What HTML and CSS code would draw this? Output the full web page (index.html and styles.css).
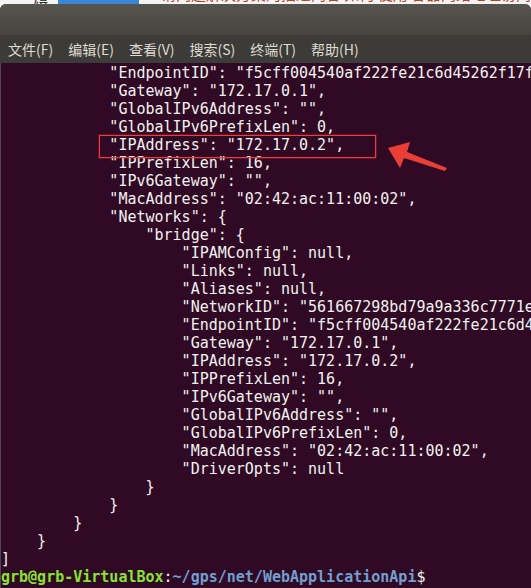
FILE: index.html
```html
<!DOCTYPE html>
<html lang="zh-CN">
<head>
    <meta charset="UTF-8">
    <title>Terminal</title>
    <link rel="stylesheet" href="styles.css">
</head>
<body>
    <div class="behind">
        <div class="behind-row">
            <span class="behind-label">编辑</span>
            <span class="behind-button">手动添加文章标签</span>
            <span class="behind-text">请问题解决方案的描述内容 如何 使用 容器网络地址访问</span>
        </div>
    </div>

    <div class="window">
        <div class="titlebar"></div>
        <div class="menubar">
            <span class="menu-item">文件(F)</span>
            <span class="menu-item">编辑(E)</span>
            <span class="menu-item">查看(V)</span>
            <span class="menu-item">搜索(S)</span>
            <span class="menu-item">终端(T)</span>
            <span class="menu-item">帮助(H)</span>
        </div>
        <div class="terminal">
<pre class="output">            "EndpointID": "f5cff004540af222fe21c6d45262f17f3a8e0c1d",
            "Gateway": "172.17.0.1",
            "GlobalIPv6Address": "",
            "GlobalIPv6PrefixLen": 0,
            "IPAddress": "172.17.0.2",
            "IPPrefixLen": 16,
            "IPv6Gateway": "",
            "MacAddress": "02:42:ac:11:00:02",
            "Networks": {
                "bridge": {
                    "IPAMConfig": null,
                    "Links": null,
                    "Aliases": null,
                    "NetworkID": "561667298bd79a9a336c7771e4c2b7f0",
                    "EndpointID": "f5cff004540af222fe21c6d45262f17f",
                    "Gateway": "172.17.0.1",
                    "IPAddress": "172.17.0.2",
                    "IPPrefixLen": 16,
                    "IPv6Gateway": "",
                    "GlobalIPv6Address": "",
                    "GlobalIPv6PrefixLen": 0,
                    "MacAddress": "02:42:ac:11:00:02",
                    "DriverOpts": null
                }
            }
        }
    }
]
<span class="user">grb@grb-VirtualBox</span>:<span class="path">~/gps/net/WebApplicationApi</span>$</pre>

            <div class="highlight-box"></div>
            <svg class="arrow" width="66" height="36" viewBox="0 0 66 36">
                <polygon points="3,8 25,2 22,12 62,28 60,31 19,18 15,28" fill="#ea3f37"/>
            </svg>
        </div>
    </div>
</body>
</html>
```

FILE: styles.css
```css
html, body {
    margin: 0;
    padding: 0;
}
body {
    width: 531px;
    height: 588px;
    overflow: hidden;
    background: #ffffff;
    display: flex;
    flex-direction: column;
}
.behind {
    height: 4px;
    overflow: hidden;
    background: #f4f4f4;
}
.behind-row {
    display: flex;
    align-items: center;
    height: 26px;
    margin-top: -20px;
    font-family: "Noto Sans CJK SC", sans-serif;
    font-size: 15px;
}
.behind-label {
    margin-left: 33px;
    width: 47px;
    color: #222222;
}
.behind-button {
    width: 155px;
    height: 26px;
    background: #3a86d6;
    color: #ffffff;
    text-align: center;
}
.behind-text {
    margin-left: 22px;
    color: #b5441f;
    white-space: nowrap;
}
.window {
    flex: 1;
    display: flex;
    flex-direction: column;
    border-radius: 6px 6px 0 0;
    overflow: hidden;
    background: #3c3b37;
}
.titlebar {
    height: 31px;
    background: linear-gradient(#57554f, #45443f);
}
.menubar {
    height: 28px;
    display: flex;
    align-items: center;
    gap: 15px;
    padding-left: 8px;
    background: #3c3b37;
    font-family: "Noto Sans CJK SC", "Noto Sans", sans-serif;
    font-size: 14px;
    color: #dfdbd2;
}
.terminal {
    position: relative;
    flex: 1;
    background: #300a24;
    border-left: 1px solid #54424e;
    padding: 1px 0 0 0;
    overflow: hidden;
}
.output {
    margin: 0;
    font-family: "DejaVu Sans Mono", monospace;
    font-size: 15px;
    line-height: 18px;
    color: #f2f2f0;
    white-space: pre;
}
.user {
    color: #8ae234;
    font-weight: bold;
}
.path {
    color: #729fcf;
    font-weight: bold;
}
.highlight-box {
    position: absolute;
    left: 98px;
    top: 72px;
    width: 275px;
    height: 21px;
    border: 1px solid #f53a35;
    box-shadow: 0 0 0 0.5px rgba(245, 58, 53, 0.5);
}
.arrow {
    position: absolute;
    left: 384px;
    top: 77px;
}
```
